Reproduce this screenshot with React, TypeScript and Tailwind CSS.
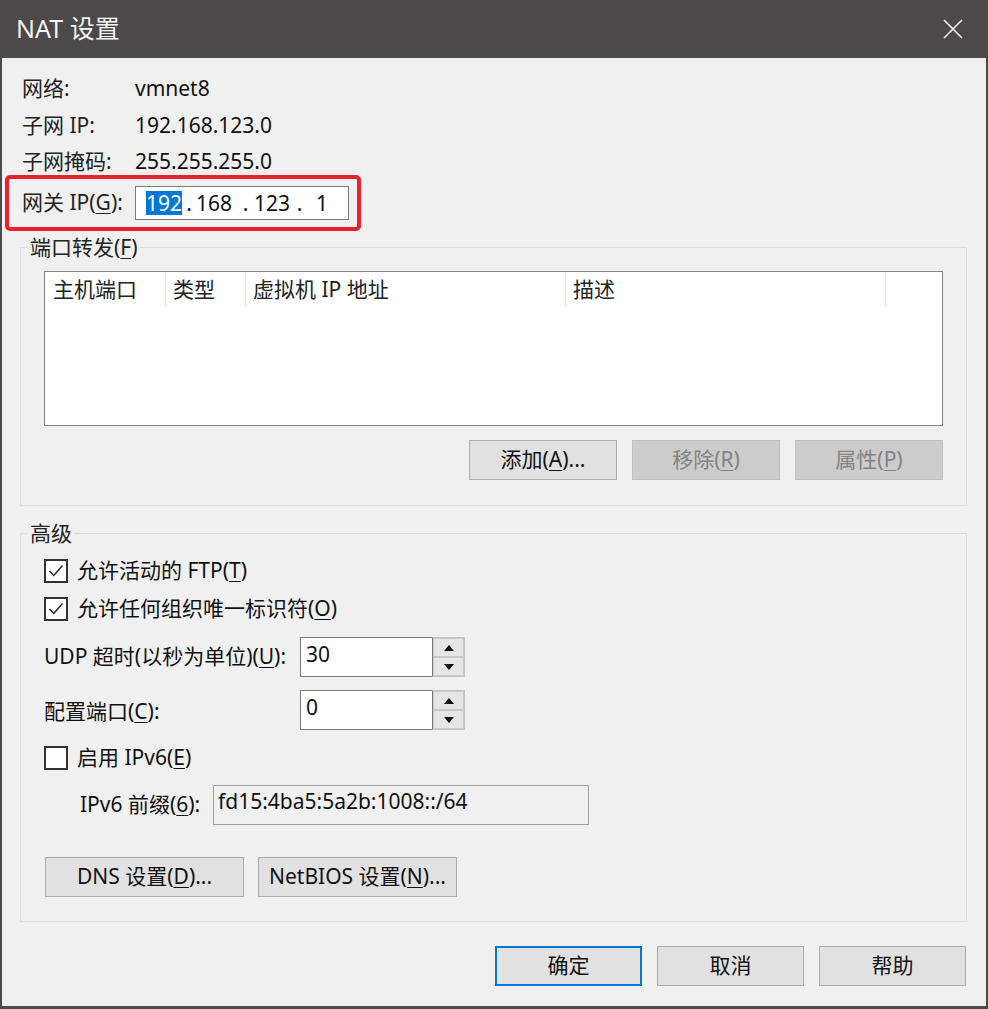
import React from "react";

const font = "font-['Noto_Sans','Noto_Sans_CJK_SC',sans-serif]";

function Acc({ c }: { c: string }) {
	return <span className="underline decoration-1 underline-offset-[3px]">{c}</span>;
}

function Button({
	children,
	className,
	disabled,
	primary,
}: {
	children: React.ReactNode;
	className: string;
	disabled?: boolean;
	primary?: boolean;
}) {
	const look = disabled
		? "bg-[#cccccc] border border-[#bfbfbf] text-[#838383]"
		: primary
			? "bg-[#e1e1e1] border-2 border-[#0078d7] text-[#111]"
			: "bg-[#e1e1e1] border border-[#adadad] text-[#111]";
	return (
		<div className={`flex h-[40px] items-center justify-center text-[21px] ${look} ${className}`}>
			{children}
		</div>
	);
}

function CheckBox({ checked }: { checked?: boolean }) {
	return (
		<div className="flex h-[24px] w-[24px] shrink-0 items-center justify-center border-2 border-[#333] bg-white">
			{checked && (
				<svg width="20" height="20" viewBox="0 0 20 20">
					<path d="M3.5 10 L7.8 14.5 L16.5 4.5" fill="none" stroke="#222" strokeWidth="1.4" />
				</svg>
			)}
		</div>
	);
}

function Spin({ value }: { value: string }) {
	return (
		<div className="flex h-[40px] w-[165px]">
			<div className="h-full w-[132px] border border-r-0 border-[#7a7a7a] bg-white pl-[5px] pt-[2px] text-[21px] leading-[28px]">
				{value}
			</div>
			<div className="flex w-[33px] flex-col border-y border-r border-[#c4c4c4] border-l border-l-[#7a7a7a]">
				<div className="flex flex-1 items-center justify-center border border-[#c9c9c9] bg-[#e6e6e6]">
					<svg width="10" height="6" viewBox="0 0 10 6">
						<path d="M5 0 L10 6 L0 6 Z" fill="#111" />
					</svg>
				</div>
				<div className="flex flex-1 items-center justify-center border border-[#c9c9c9] bg-[#e6e6e6]">
					<svg width="10" height="6" viewBox="0 0 10 6">
						<path d="M0 0 L10 0 L5 6 Z" fill="#111" />
					</svg>
				</div>
			</div>
		</div>
	);
}

export default function App() {
	return (
		<div className={`flex h-[1009px] w-[988px] flex-col bg-[#4b4949] px-[2px] pb-[3px] ${font}`}>
			{/* Title bar */}
			<div className="-mx-[2px] flex h-[58px] shrink-0 items-center justify-between pl-[16px] pr-[25px]">
				<span className="text-[25px] text-[#f4f4f4]">NAT 设置</span>
				<svg width="20" height="20" viewBox="0 0 20 20">
					<path d="M1 1 L19 19 M19 1 L1 19" stroke="#f4f4f4" strokeWidth="1.6" />
				</svg>
			</div>

			{/* Body */}
			<div className="flex flex-1 flex-col bg-[#f0f0f0] pt-[13px] text-[21px] text-[#111]">
				<div className="flex h-[36px] items-center pl-[20px]">
					<span className="w-[113px] text-[#222]">网络:</span>
					<span>vmnet8</span>
				</div>
				<div className="flex h-[37px] items-center pl-[20px]">
					<span className="w-[113px] text-[#222]">子网 IP:</span>
					<span>192.168.123.0</span>
				</div>
				<div className="flex h-[31px] items-center pl-[20px] pt-[5px]">
					<span className="w-[113px] text-[#222]">子网掩码:</span>
					<span>255.255.255.0</span>
				</div>

				{/* Gateway (highlighted) */}
				<div className="ml-[3px] flex h-[56px] w-[356px] items-center rounded-[5px] border-[4px] border-[#e5222d] pl-[13px]">
					<span className="w-[113px] text-[#222]">
						网关 IP(<Acc c="G" />):
					</span>
					<div className="flex h-[34px] w-[214px] items-center border border-[#7a7a7a] bg-white pl-[10px] leading-[24px]">
						<span className="h-[24px] w-[36px] bg-[#0078d7] text-white">192</span>
						<span className="w-[14px] text-center">.</span>
						<span className="w-[41px]">168</span>
						<span className="w-[17px] text-center">.</span>
						<span className="w-[37px]">123</span>
						<span className="w-[17px] text-center">.</span>
						<span className="w-[20px] text-right">1</span>
					</div>
				</div>

				{/* Port forwarding */}
				<fieldset className="ml-[18px] mt-[4px] w-[947px] border border-[#dcdcdc] px-[7px] pb-[25px] pt-[12px]">
					<legend className="px-[2px] leading-[24px] text-[#222]">
						端口转发(<Acc c="F" />)
					</legend>
					<div className="px-[16px]">
						<div className="h-[155px] border border-[#828282] bg-white">
							<div className="flex h-[36px] text-[#222]">
								<div className="my-[1px] flex w-[121px] items-center border-r border-[#e5e5e5] pl-[8px]">主机端口</div>
								<div className="my-[1px] flex w-[80px] items-center border-r border-[#e5e5e5] pl-[7px]">类型</div>
								<div className="my-[1px] flex w-[320px] items-center border-r border-[#e5e5e5] pl-[7px]">虚拟机 IP 地址</div>
								<div className="my-[1px] flex w-[320px] items-center border-r border-[#e5e5e5] pl-[7px]">描述</div>
							</div>
						</div>
						<div className="mt-[14px] flex justify-end gap-[15px]">
							<Button className="w-[148px]">
								添加(<Acc c="A" />)...
							</Button>
							<Button className="w-[148px]" disabled>
								移除(<Acc c="R" />)
							</Button>
							<Button className="w-[148px]" disabled>
								属性(<Acc c="P" />)
							</Button>
						</div>
					</div>
				</fieldset>

				{/* Advanced */}
				<fieldset className="ml-[18px] mt-[15px] w-[947px] border border-[#dcdcdc] px-[7px] pb-[24px] pt-[7px]">
					<legend className="px-[2px] leading-[24px] text-[#222]">高级</legend>
					<div className="flex flex-col px-[16px]">
						<div className="flex h-[38px] items-center">
							<CheckBox checked />
							<span className="ml-[9px]">
								允许活动的 FTP(<Acc c="T" />)
							</span>
						</div>
						<div className="flex h-[38px] items-center">
							<CheckBox checked />
							<span className="ml-[9px]">
								允许任何组织唯一标识符(<Acc c="O" />)
							</span>
						</div>
						<div className="mt-[9px] flex h-[40px] items-center">
							<span className="w-[256px]">
								UDP 超时(以秒为单位)(<Acc c="U" />):
							</span>
							<Spin value="30" />
						</div>
						<div className="mt-[13px] flex h-[40px] items-center">
							<span className="w-[256px] pt-[4px]">
								配置端口(<Acc c="C" />):
							</span>
							<Spin value="0" />
						</div>
						<div className="mt-[10px] flex h-[36px] items-center">
							<CheckBox />
							<span className="ml-[9px]">
								启用 IPv6(<Acc c="E" />)
							</span>
						</div>
						<div className="mt-[9px] flex h-[40px] items-center pl-[36px]">
							<span className="w-[133px]">
								IPv6 前缀(<Acc c="6" />):
							</span>
							<div className="h-[40px] w-[376px] border border-[#a0a0a0] bg-[#f0f0f0] pl-[4px] pt-[1px] leading-[28px]">
								fd15:4ba5:5a2b:1008::/64
							</div>
						</div>
						<div className="mt-[32px] flex gap-[14px] pl-[1px]">
							<Button className="w-[199px]">
								DNS 设置(<Acc c="D" />)...
							</Button>
							<Button className="w-[199px]">
								NetBIOS 设置(<Acc c="N" />)...
							</Button>
						</div>
					</div>
				</fieldset>

				{/* Dialog buttons */}
				<div className="mt-[24px] flex justify-end gap-[15px] pr-[20px]">
					<Button className="w-[147px]" primary>
						确定
					</Button>
					<Button className="w-[147px]">取消</Button>
					<Button className="w-[147px]">帮助</Button>
				</div>
			</div>
		</div>
	);
}
